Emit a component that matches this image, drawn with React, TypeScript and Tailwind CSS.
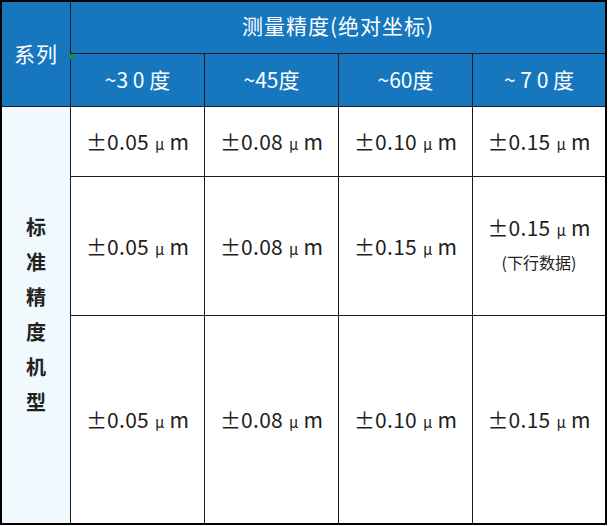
import React from "react";

const font = { fontFamily: '"Noto Sans CJK SC", "Noto Sans", sans-serif' };

function Val({ v }: { v: string }) {
  return (
    <span className="text-[21px] text-[#1e1e1e] leading-none whitespace-nowrap flex items-baseline">
      <span>±</span>
      <span className="tracking-[0.3px]">{v}</span>
      <span className="text-[15px] ml-[6px] mr-[5px]">μ</span>
      <span>m</span>
    </span>
  );
}

export default function App() {
  const rows: string[][] = [
    ["0.05", "0.08", "0.10", "0.15"],
    ["0.05", "0.08", "0.15", "0.15"],
    ["0.05", "0.08", "0.10", "0.15"],
  ];
  return (
    <div className="w-[609px] h-[526px] bg-white" style={font}>
      <div className="w-[607px] h-[525px] border-2 border-black bg-[#1b1b1b] grid gap-px grid-cols-[68px_133px_133px_133px_132px] grid-rows-[51px_52px_69px_138px_1fr]">
        <div className="row-span-2 bg-[#1677be] text-white text-[21px] tracking-[1px] flex items-center justify-center">
          系列
        </div>
        <div className="col-span-4 bg-[#1677be] text-white text-[21px] tracking-[1px] flex items-center justify-center pb-[3px]">
          测量精度(绝对坐标)
        </div>
        {["~3 0 度", "~45度", "~60度", "~ 7 0 度"].map((t, i) => (
          <div key={i} className="bg-[#1677be] text-white text-[21px] flex items-center justify-center whitespace-pre relative">
            {t}
            {i === 0 && (
              <div className="absolute left-[-1px] top-0 w-0 h-0 border-t-[6px] border-t-[#0f9d3a] border-r-[6px] border-r-transparent" />
            )}
          </div>
        ))}
        <div className="row-span-3 bg-[#f0f9fe] flex flex-col items-center justify-center text-[20px] leading-[35px] font-semibold text-[#222] pb-[2px]">
          {"标准精度机型".split("").map((c, i) => (
            <span key={i}>{c}</span>
          ))}
        </div>
        {rows.map((r, ri) =>
          r.map((v, ci) => (
            <div key={`${ri}-${ci}`} className="bg-white flex flex-col items-center justify-center">
              {ri === 1 && ci === 3 ? (
                <>
                  <span className="mt-[-4px]"><Val v={v} /></span>
                  <span className="text-[16px] text-[#222] leading-[20px] mt-[14px]">(下行数据)</span>
                </>
              ) : (
                <Val v={v} />
              )}
            </div>
          ))
        )}
      </div>
    </div>
  );
}
